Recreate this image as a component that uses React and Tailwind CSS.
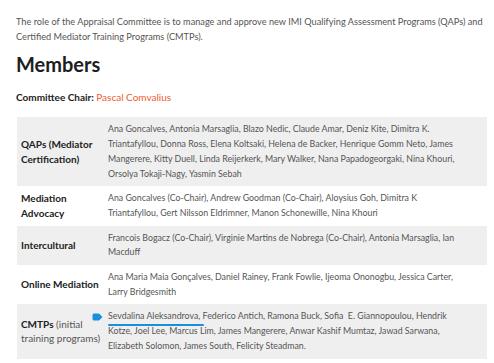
const rows = [
  {
    label: <span className="font-bold text-[#222]">QAPs (Mediator<br />Certification)</span>,
    lines: [
      "Ana Goncalves, Antonia Marsaglia, Blazo Nedic, Claude Amar, Deniz Kite, Dimitra K.",
      "Triantafyllou, Donna Ross, Elena Koltsaki, Helena de Backer, Henrique Gomm Neto, James",
      "Mangerere, Kitty Duell, Linda Reijerkerk, Mary Walker, Nana Papadogeorgaki, Nina Khouri,",
      "Orsolya Tokaji-Nagy, Yasmin Sebah",
    ],
    shade: true,
  },
  {
    label: <span className="font-bold text-[#222]">Mediation<br />Advocacy</span>,
    lines: [
      "Ana Goncalves (Co-Chair), Andrew Goodman (Co-Chair), Aloysius Goh, Dimitra K",
      "Triantafyllou, Gert Nilsson Eldrimner, Manon Schonewille, Nina Khouri",
    ],
    shade: false,
  },
  {
    label: <span className="font-bold text-[#222]">Intercultural</span>,
    lines: [
      "Francois Bogacz (Co-Chair), Virginie Martins de Nobrega (Co-Chair), Antonia Marsaglia, Ian",
      "Macduff",
    ],
    shade: true,
  },
  {
    label: <span className="font-bold text-[#222]">Online Mediation</span>,
    lines: [
      "Ana Maria Maia Gonçalves, Daniel Rainey, Frank Fowlie, Ijeoma Ononogbu, Jessica Carter,",
      "Larry Bridgesmith",
    ],
    shade: false,
  },
];

const Arrow = () => (
  <svg width="11" height="8" viewBox="0 0 11 8" className="absolute left-[-16px] top-[4px]">
    <path d="M2 0.5 H7 L10.5 4 L7 7.5 H2 Q0.5 7.5 0.5 6 V2 Q0.5 0.5 2 0.5 Z" fill="#1a8fe0" />
  </svg>
);

const Row = ({ label, shade, children }) => (
  <div className={`flex ${shade ? "bg-[#efefef]" : "bg-white"}`}>
    <div className="flex w-[86px] shrink-0 items-center pl-1 text-[10px] leading-[14.7px]">{label}</div>
    <div className="relative py-[5px] pl-[5px] text-[8.8px]">{children}</div>
  </div>
);

export default function App() {
  return (
    <div
      className="h-[363px] w-[494px] overflow-hidden bg-white pl-4 pr-[7px] text-[9.2px] leading-[14.7px] text-[#555]"
      style={{ fontFamily: "Lato, 'Open Sans', sans-serif" }}
    >
      <p className="whitespace-nowrap pt-[15px]">
        The role of the Appraisal Committee is to manage and approve new IMI Qualifying Assessment Programs (QAPs) and
        <br />
        Certified Mediator Training Programs (CMTPs).
      </p>
      <h2 className="mt-[8px] text-[20px] leading-[24px] font-bold text-[#1e1e1e]">Members</h2>
      <p className="mt-[14px] text-[10px] leading-[15px]">
        <span className="font-bold text-[#222]">Committee Chair: </span>
        <span className="text-[#ef5a32]">Pascal Comvalius</span>
      </p>
      <div className="mt-[12px] ml-px">
        {rows.map((r, i) => (
          <Row key={i} label={r.label} shade={r.shade}>
            {r.lines.map((l, j) => (
              <span key={j} className="block whitespace-nowrap">{l}</span>
            ))}
          </Row>
        ))}
        <Row
          shade
          label={
            <span>
              <span className="font-bold text-[#222]">CMTPs</span> (initial
              <br />
              training programs)
            </span>
          }
        >
          <span className="relative block whitespace-nowrap">
            <Arrow />
            <span className="relative">
              Sevdalina Aleksandrova,
              <span className="absolute left-0 right-[-4px] top-[14px] h-[2px] rounded-full bg-[#1a8fe0]" />
            </span>{" "}
            Federico Antich, Ramona Buck, Sofia{"\u00a0"} E. Giannopoulou, Hendrik
          </span>
          <span className="block whitespace-nowrap">
            Kotze, Joel Lee, Marcus Lim, James Mangerere, Anwar Kashif Mumtaz, Jawad Sarwana,
          </span>
          <span className="block whitespace-nowrap">Elizabeth Solomon, James South, Felicity Steadman.</span>
        </Row>
      </div>
    </div>
  );
}
